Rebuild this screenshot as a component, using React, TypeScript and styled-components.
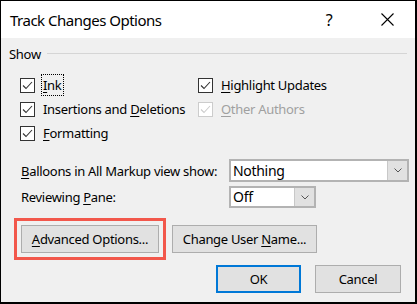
import React from "react";
import styled, { createGlobalStyle } from "styled-components";

const GlobalStyle = createGlobalStyle`
  html, body {
    margin: 0;
    padding: 0;
    background: #f0f0f0;
  }
  body {
    font-family: "Noto Sans", "Open Sans", sans-serif;
    color: #000;
  }
`;

const Dialog = styled.div`
  width: 417px;
  height: 304px;
  box-sizing: border-box;
  border-style: solid;
  border-color: #000;
  border-width: 1px 2px 2px 1px;
  background: #f0f0f0;
  display: flex;
  flex-direction: column;
  font-size: 13px;
  letter-spacing: -0.3px;
  line-height: 18px;
`;

const TitleBar = styled.div`
  height: 37px;
  flex-shrink: 0;
  background: #fff;
  display: flex;
  align-items: center;
  padding: 0 6px 0 9px;
`;

const Title = styled.div`
  font-size: 15px;
  letter-spacing: -0.5px;
  flex: 1;
`;

const TitleButton = styled.div<{ $gap?: number }>`
  width: 44px;
  height: 37px;
  display: flex;
  align-items: center;
  justify-content: center;
  font-size: 16px;
  margin-left: ${(p) => p.$gap ?? 0}px;
`;

const Body = styled.div`
  flex: 1;
  padding: 6px 8px 0 8px;
  display: flex;
  flex-direction: column;
`;

const GroupHeader = styled.div`
  display: flex;
  align-items: center;
  gap: 6px;
  height: 19px;
`;

const GroupLine = styled.div`
  flex: 1;
  height: 1px;
  background: #d5d5d5;
`;

const CheckGrid = styled.div`
  display: grid;
  grid-template-columns: 178px 1fr;
  grid-auto-rows: 24px;
  margin: 10px 0 0 11px;
`;

const CheckRow = styled.label<{ $disabled?: boolean }>`
  display: flex;
  align-items: center;
  gap: 8px;
  color: ${(p) => (p.$disabled ? "#a0a0a0" : "#000")};
  white-space: nowrap;
`;

const Box = styled.span<{ $disabled?: boolean }>`
  width: 15px;
  height: 15px;
  box-sizing: border-box;
  border: 1px solid ${(p) => (p.$disabled ? "#cccccc" : "#333")};
  background: #fff;
  display: flex;
  align-items: center;
  justify-content: center;
  flex-shrink: 0;
`;

const Focus = styled.span`
  outline: 1px dotted #000;
  outline-offset: 1px;
`;

const Key = styled.span`
  text-decoration: underline;
  text-underline-offset: 2px;
`;

const FormRow = styled.div<{ $top: number }>`
  display: grid;
  grid-template-columns: 208px auto;
  align-items: center;
  white-space: nowrap;
  margin: ${(p) => p.$top}px 0 0 12px;
`;

const Select = styled.div<{ $width: number; $height: number }>`
  width: ${(p) => p.$width}px;
  height: ${(p) => p.$height}px;
  box-sizing: border-box;
  border: 2px solid #b3b3b3;
  background: #fff;
  display: flex;
  align-items: stretch;
  font-size: 14px;
`;

const SelectValue = styled.div`
  flex: 1;
  display: flex;
  align-items: center;
  padding-left: 2px;
`;

const SelectArrow = styled.div`
  width: 19px;
  background: #e1e1e1;
  border-left: 1px solid #c8c8c8;
  display: flex;
  align-items: center;
  justify-content: center;
`;

const ButtonRow = styled.div<{ $top: number; $justify?: string; $gap: number }>`
  display: flex;
  justify-content: ${(p) => p.$justify ?? "flex-start"};
  gap: ${(p) => p.$gap}px;
  margin-top: ${(p) => p.$top}px;
  padding: 0 6px 0 12px;
`;

const Button = styled.div<{ $width: number; $primary?: boolean; $marked?: boolean }>`
  width: ${(p) => p.$width}px;
  height: 28px;
  box-sizing: border-box;
  background: #e1e1e1;
  border: ${(p) => (p.$primary ? "2px solid #0078d7" : "1px solid #adadad")};
  display: flex;
  align-items: center;
  justify-content: center;
  white-space: nowrap;
  outline: ${(p) => (p.$marked ? "3px solid #f2574b" : "none")};
  outline-offset: 4px;
`;

const Check = ({ color = "#333" }: { color?: string }) => (
  <svg width="11" height="9" viewBox="0 0 11 9">
    <path d="M1 4.5 L4 7.5 L10 1" fill="none" stroke={color} strokeWidth="1.1" />
  </svg>
);

const Chevron = () => (
  <svg width="8" height="5" viewBox="0 0 8 5">
    <path d="M0.5 0.5 L4 4 L7.5 0.5" fill="none" stroke="#555" strokeWidth="1" />
  </svg>
);

const CloseIcon = () => (
  <svg width="13" height="13" viewBox="0 0 13 13">
    <path d="M0.5 0.5 L12.5 12.5 M12.5 0.5 L0.5 12.5" stroke="#000" strokeWidth="1.1" />
  </svg>
);

const CheckItem = ({ children, disabled }: { children: React.ReactNode; disabled?: boolean }) => (
  <CheckRow $disabled={disabled}>
    <Box $disabled={disabled}>
      <Check color={disabled ? "#cccccc" : "#333"} />
    </Box>
    {children}
  </CheckRow>
);

export default function App() {
  return (
    <>
      <GlobalStyle />
      <Dialog>
        <TitleBar>
          <Title>Track Changes Options</Title>
          <TitleButton>?</TitleButton>
          <TitleButton $gap={14}>
            <CloseIcon />
          </TitleButton>
        </TitleBar>
        <Body>
          <GroupHeader>
            <span>Show</span>
            <GroupLine />
          </GroupHeader>
          <CheckGrid>
            <CheckItem>
              <Focus>
                <Key>I</Key>nk
              </Focus>
            </CheckItem>
            <CheckItem>
              <span>
                <Key>H</Key>ighlight Updates
              </span>
            </CheckItem>
            <CheckItem>
              <span>
                Insertions and <Key>D</Key>eletions
              </span>
            </CheckItem>
            <CheckItem disabled>
              <span>
                <Key>O</Key>ther Authors
              </span>
            </CheckItem>
            <CheckItem>
              <span>
                <Key>F</Key>ormatting
              </span>
            </CheckItem>
          </CheckGrid>
          <FormRow $top={14}>
            <span>
              <Key>B</Key>alloons in All Markup view show:
            </span>
            <Select $width={180} $height={23}>
              <SelectValue>Nothing</SelectValue>
              <SelectArrow>
                <Chevron />
              </SelectArrow>
            </Select>
          </FormRow>
          <FormRow $top={4}>
            <span>
              Reviewing <Key>P</Key>ane:
            </span>
            <Select $width={87} $height={22}>
              <SelectValue>Off</SelectValue>
              <SelectArrow>
                <Chevron />
              </SelectArrow>
            </Select>
          </FormRow>
          <ButtonRow $top={17} $gap={13}>
            <Button $width={138} $marked>
              <span>
                <Key>A</Key>dvanced Options...
              </span>
            </Button>
            <Button $width={145}>
              <span>
                Change User <Key>N</Key>ame...
              </span>
            </Button>
          </ButtonRow>
          <ButtonRow $top={12} $gap={14} $justify="flex-end">
            <Button $width={85} $primary>
              OK
            </Button>
            <Button $width={86}>Cancel</Button>
          </ButtonRow>
        </Body>
      </Dialog>
    </>
  );
}
